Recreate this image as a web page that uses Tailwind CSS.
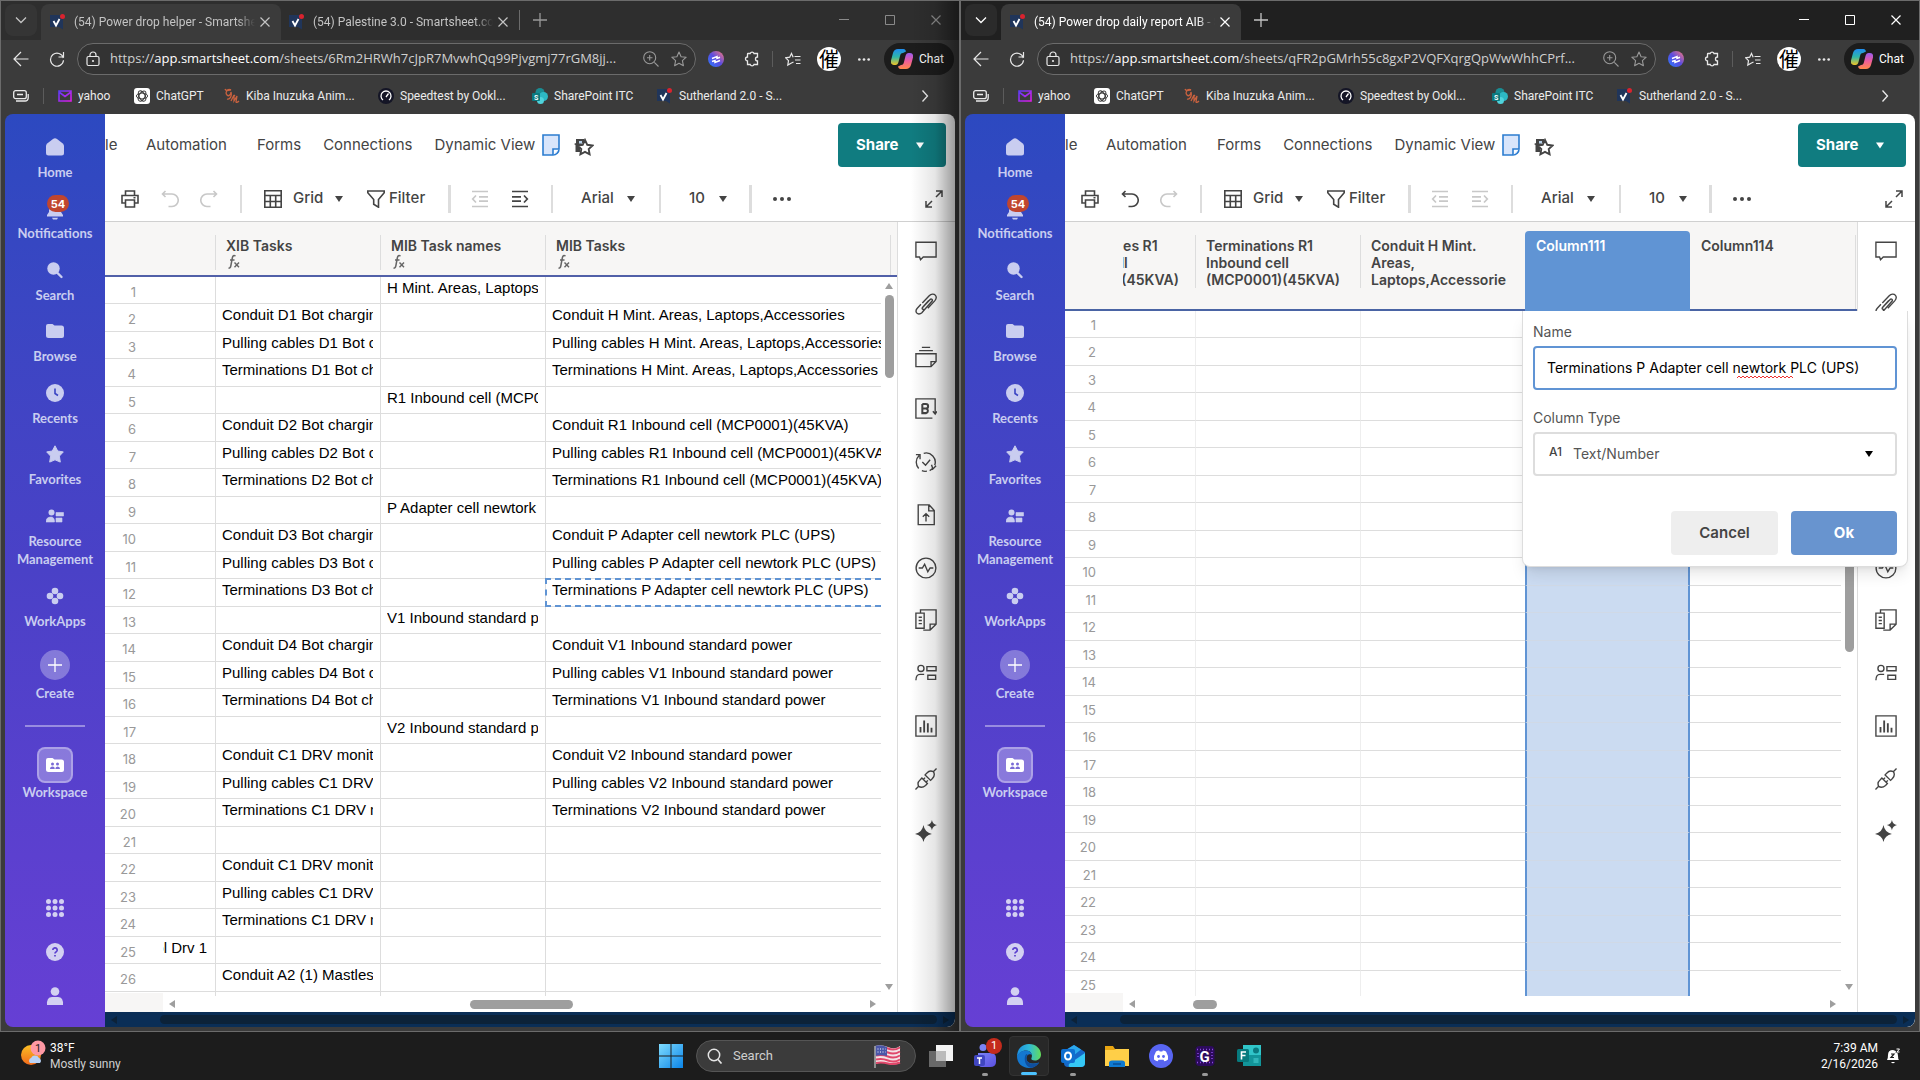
<!DOCTYPE html>
<html lang="en">

<head>
    <meta charset="UTF-8">
    <title>Desktop</title>
    <script src="https://cdn.jsdelivr.net/npm/@tailwindcss/browser@4"></script>
</head>

<body class="flex h-screen flex-col overflow-hidden bg-[#1c1c1c] font-['Roboto',sans-serif]">

    <!-- ICONS -->
    <svg class="absolute size-0">
        <linearGradient id="g-win" x1="0" y1="0" x2="1" y2="1"><stop offset="0" stop-color="#7fdcff"/><stop offset="1" stop-color="#0a84e8"/></linearGradient>
        <linearGradient id="g-yahoo" x1="0" y1="0" x2="1" y2="1"><stop offset="0" stop-color="#5b3cf5"/><stop offset="1" stop-color="#e01be8"/></linearGradient>
        <linearGradient id="g-orb" x1="0" y1="1" x2="1" y2="0"><stop offset="0" stop-color="#2a7bff"/><stop offset=".5" stop-color="#5b4be0"/><stop offset="1" stop-color="#ff7a7a"/></linearGradient>
        <linearGradient id="g-cop1" x1="0" y1="0" x2="0" y2="1"><stop offset="0" stop-color="#1f8df0"/><stop offset=".5" stop-color="#2fb7a8"/><stop offset="1" stop-color="#f2c526"/></linearGradient>
        <linearGradient id="g-cop2" x1="0" y1="0" x2="0" y2="1"><stop offset="0" stop-color="#9a5cf0"/><stop offset=".5" stop-color="#ee5c9c"/><stop offset="1" stop-color="#ff8a4a"/></linearGradient>
        <linearGradient id="g-edge" x1="0" y1="0" x2="1" y2="0"><stop offset="0" stop-color="#1c8fe0"/><stop offset=".5" stop-color="#2fb9d8"/><stop offset="1" stop-color="#63dc5a"/></linearGradient>
        <linearGradient id="g-teams" x1="0" y1="0" x2="1" y2="1"><stop offset="0" stop-color="#7b83f5"/><stop offset="1" stop-color="#5a4fe0"/></linearGradient>
        <linearGradient id="g-sun" x1="0" y1="0" x2="0" y2="1"><stop offset="0" stop-color="#fbbf24"/><stop offset="1" stop-color="#f26a1b"/></linearGradient>

        <symbol id="i-smart" viewBox="0 0 16 16"><path d="M0 1h13v14.500l-4-2.500H0z" fill="#20355a"/><path d="M3.500 7l2.500 4.500L9.500 5" fill="none" stroke="#fff" stroke-width="1.800"/><circle cx="12.500" cy="2.500" r="2.500" fill="#d9232e"/></symbol>
        <symbol id="i-chevdown" viewBox="0 0 12 12"><path d="M1 3.500l5 5 5-5" fill="none" stroke="currentColor" stroke-width="1.300"/></symbol>
        <symbol id="i-chevright" viewBox="0 0 12 12"><path d="M3.500 0.500l5 5.500-5 5.500" fill="none" stroke="currentColor" stroke-width="1.300"/></symbol>
        <symbol id="i-x" viewBox="0 0 12 12"><path d="M1.500 1.500l9 9M10.500 1.500l-9 9" fill="none" stroke="currentColor" stroke-width="1.200"/></symbol>
        <symbol id="i-plus" viewBox="0 0 16 16"><path d="M8 1v14M1 8h14" fill="none" stroke="currentColor" stroke-width="1.300"/></symbol>
        <symbol id="i-min" viewBox="0 0 12 12"><path d="M1 5.500h10" stroke="currentColor"/></symbol>
        <symbol id="i-max" viewBox="0 0 12 12"><path d="M1.500 1.500h9v9h-9z" fill="none" stroke="currentColor"/></symbol>
        <symbol id="i-back" viewBox="0 0 16 16"><path d="M15.500 8H1M8 1L1 8l7 7" fill="none" stroke="currentColor" stroke-width="1.200"/></symbol>
        <symbol id="i-reload" viewBox="0 0 16 16"><path d="M14.300 7a6.500 6.500 0 1 0 .2 2.200M14.500 1v5h-5" fill="none" stroke="currentColor" stroke-width="1.200"/></symbol>
        <symbol id="i-lock" viewBox="0 0 14 16"><path d="M2.500 5.500h9a1.500 1.500 0 0 1 1.500 1.500v6a1.500 1.500 0 0 1-1.500 1.500h-9A1.500 1.500 0 0 1 1 13V7a1.500 1.500 0 0 1 1.500-1.500zM4 5.500V4a3 3 0 0 1 6 0v1.500" fill="none" stroke="currentColor" stroke-width="1.200"/><circle cx="7" cy="10" r="1.100" fill="currentColor"/></symbol>
        <symbol id="i-zoomin" viewBox="0 0 16 16"><path d="M11.300 11.300L15.500 15.500M4 6.700h5.500M6.700 4v5.500" fill="none" stroke="currentColor" stroke-width="1.100"/><circle cx="6.700" cy="6.700" r="6" fill="none" stroke="currentColor" stroke-width="1.100"/></symbol>
        <symbol id="i-star" viewBox="0 0 16 16"><path d="M8 1l2.100 4.700 5.100.5-3.800 3.500 1 5L8 12.200l-4.400 2.500 1-5L.8 6.200l5.100-.5z" fill="none" stroke="currentColor" stroke-width="1.100" stroke-linejoin="round"/></symbol>
        <symbol id="i-orb" viewBox="0 0 16 16"><circle cx="8" cy="8" r="8" fill="url(#g-orb)"/><path d="M4 7.500l5-2v2l3-1.200M4 10.500l3-1v2l5-2" fill="none" stroke="#fff" stroke-width="1.500"/></symbol>
        <symbol id="i-puzzle" viewBox="0 0 16 16"><path d="M4 2.500h2.200a2 2 0 0 1 3.800 0h3.500v3.500a1.600 1.600 0 0 0 0 4v3.500H10a2 2 0 0 1-3.800 0H3.500V10a2 2 0 1 1 0-4V3a.5.5 0 0 1 .5-.5z" fill="none" stroke="currentColor" stroke-width="1.300"/></symbol>
        <symbol id="i-favs" viewBox="0 0 16 16"><path d="M8.500 11L6 12.200 2.800 14l.7-4.300L.7 6.800l4-.6L6.500 2.500l1.700 3.700M9.500 5.500h6M10 9h5.500M11 12.500h4.500" fill="none" stroke="currentColor" stroke-width="1.200"/></symbol>
        <symbol id="i-copilot" viewBox="0 0 22 20"><path d="M7 0h5.500c1.500 0 2 1 2.500 2.500L12 4c-2 0-2.500 1-3 3l-1.500 6c-.5 2-1.500 3-3 3H3c-2.500 0-3.500-2-3-4.500L2 4C2.800 1.500 4.500 0 7 0z" fill="url(#g-cop1)"/><path d="M15 20H9.500C8 20 7.500 19 7 17.500l3-1.500c2 0 2.500-1 3-3l1.500-6c.5-2 1.500-3 3-3H19c2.500 0 3.500 2 3 4.500L20 16c-.8 2.500-2.500 4-5 4z" fill="url(#g-cop2)"/></symbol>
        <symbol id="i-workspaces" viewBox="0 0 16 12"><rect x=".7" y=".7" width="12.600" height="8" rx="2" fill="none" stroke="currentColor" stroke-width="1.300"/><path d="M4 4.500h6M3 11h9a3 3 0 0 0 3.200-3V4" fill="none" stroke="currentColor" stroke-width="1.300"/></symbol>
        <symbol id="i-yahoo" viewBox="0 0 14 12"><path d="M1 1h12v10H1zM1 2l6 4.500L13 2" fill="none" stroke="url(#g-yahoo)" stroke-width="1.600"/></symbol>
        <symbol id="i-gpt" viewBox="0 0 16 16"><rect width="16" height="16" rx="3" fill="#fff"/><g fill="none" stroke="#333" stroke-width=".9"><ellipse cx="8" cy="8" rx="5.600" ry="2.900"/><ellipse cx="8" cy="8" rx="5.600" ry="2.900" transform="rotate(60 8 8)"/><ellipse cx="8" cy="8" rx="5.600" ry="2.900" transform="rotate(120 8 8)"/></g></symbol>
        <symbol id="i-kiba" viewBox="0 0 16 16"><path d="M1 1c1 3 5 1 6 1-4-2-6 3-4 5s4-1 4-3c1 4-1 8-4 7M7 13l3-6v6l3-5-1 6c1 1 2 0 3-1M10 8l1-1" fill="none" stroke="#c9623f" stroke-width="1.300"/></symbol>
        <symbol id="i-speed" viewBox="0 0 16 16"><circle cx="8" cy="8" r="8" fill="#141526"/><path d="M5 12a5 5 0 1 1 6 0M8 9l2.500-3.500" fill="none" stroke="#fff" stroke-width="1.300"/></symbol>
        <symbol id="i-sharepoint" viewBox="0 0 16 16"><circle cx="8" cy="4.500" r="4.500" fill="#1a8c93"/><circle cx="11.500" cy="8.500" r="4.500" fill="#2db8c4"/><circle cx="8.500" cy="12.500" r="3.500" fill="#4fd3dc"/><rect y="5" width="8" height="8" rx="1" fill="#0b7a80"/><text x="2" y="11.500" font-size="7" font-weight="700" fill="#fff">S</text></symbol>

        <symbol id="i-home" viewBox="0 0 18 18"><path d="M0 8Q0 6.500 1.200 5.500L7 1q2-1.400 4 0l5.800 4.500Q18 6.500 18 8v7a2.500 2.500 0 0 1-2.500 2.500h-13A2.500 2.500 0 0 1 0 15z" fill="currentColor"/></symbol>
        <symbol id="i-bell" viewBox="0 0 18 18"><path d="M9 0a6 6 0 0 0-6 6v4l-2 3v1.500h16V13l-2-3V6a6 6 0 0 0-6-6zM6 15.800h6L11 17.500H7z" fill="currentColor"/></symbol>
        <symbol id="i-search" viewBox="0 0 18 18"><circle cx="7.500" cy="7.500" r="6.200" fill="currentColor"/><path d="M10.500 11l5 5" stroke="currentColor" stroke-width="2.400" stroke-linecap="round"/></symbol>
        <symbol id="i-folder" viewBox="0 0 18 18"><path d="M0 4a2 2 0 0 1 2-2h4.500l2 1.500H15.500a2.500 2.500 0 0 1 2.500 2.500v8a2 2 0 0 1-2 2H2.500A2.500 2.500 0 0 1 0 13.500z" fill="currentColor"/></symbol>
        <symbol id="i-clock" viewBox="0 0 18 18"><circle cx="9" cy="9" r="9" fill="currentColor"/><path d="M9 4.500V9.500l3 2" fill="none" stroke="#3a44c4" stroke-width="1.600"/></symbol>
        <symbol id="i-fav" viewBox="0 0 18 18"><path d="M9 .8l2.700 5.200 5.600.9-3.900 4.200.9 6L9 14.800l-5.300 2.300.9-6L.7 6.900 6.300 6z" fill="currentColor" stroke="currentColor" stroke-linejoin="round"/></symbol>
        <symbol id="i-res" viewBox="0 0 18 14"><circle cx="5.500" cy="3.500" r="3" fill="currentColor"/><path d="M0 13q0-5 5-5 3.500 0 3.500 5zM10 3.500h7.500v3.500H10zM10 9h6v4h-6z" fill="currentColor" stroke="currentColor" stroke-width=".6" stroke-linejoin="round"/></symbol>
        <symbol id="i-apps" viewBox="0 0 18 18"><g fill="currentColor"><circle cx="9" cy="4" r="3.300"/><circle cx="4" cy="9" r="3.300"/><circle cx="14" cy="9" r="3.300"/><circle cx="9" cy="14" r="3.300"/></g></symbol>
        <symbol id="i-wsp" viewBox="0 0 18 16"><path d="M0 3a2 2 0 0 1 2-2h4.500l2 1.500H15.500A2.500 2.500 0 0 1 18 5v8a2 2 0 0 1-2 2H2.500A2.500 2.500 0 0 1 0 12.500z" fill="#fff"/><g fill="#7a6bd6"><circle cx="6.500" cy="7" r="1.500"/><circle cx="11.500" cy="7" r="1.500"/><path d="M4 12q0-2.500 2.500-2.500T8.700 12zM9.300 12q0-2.500 2.400-2.500T14 12z"/></g></symbol>
        <symbol id="i-nine" viewBox="0 0 18 18"><g fill="currentColor"><circle cx="2.500" cy="2.500" r="2.500"/><circle cx="9" cy="2.500" r="2.500"/><circle cx="15.500" cy="2.500" r="2.500"/><circle cx="2.500" cy="9" r="2.500"/><circle cx="9" cy="9" r="2.500"/><circle cx="15.500" cy="9" r="2.500"/><circle cx="2.500" cy="15.500" r="2.500"/><circle cx="9" cy="15.500" r="2.500"/><circle cx="15.500" cy="15.500" r="2.500"/></g></symbol>
        <symbol id="i-help" viewBox="0 0 18 18"><circle cx="9" cy="9" r="9" fill="currentColor"/><path d="M6.800 7a2.200 2.200 0 1 1 3.200 2q-1 .5-1 1.500M9 12v1.600" fill="none" stroke="#5a3fce" stroke-width="1.700"/></symbol>
        <symbol id="i-user" viewBox="0 0 18 18"><circle cx="9" cy="4.500" r="4.300" fill="currentColor"/><path d="M1 18q-.5-8 5-8h6q5.500 0 5 8z" fill="currentColor"/></symbol>

        <symbol id="i-print" viewBox="0 0 18 18"><path d="M4.500 5V1h9v4M4.500 13H1V5.500h16V13h-3.500M4.500 10h9v7h-9zM12.500 7.700h2" fill="none" stroke="currentColor" stroke-width="1.600"/></symbol>
        <symbol id="i-undo" viewBox="0 0 18 18"><path d="M4.500 1L1.500 4l3 3M1.500 4H11a6 6 0 0 1 0 12.500H7.500" fill="none" stroke="currentColor" stroke-width="1.600"/></symbol>
        <symbol id="i-redo" viewBox="0 0 18 18"><path d="M13.500 1l3 3-3 3M16.500 4H7a6 6 0 0 0 0 12.500h3.500" fill="none" stroke="currentColor" stroke-width="1.600"/></symbol>
        <symbol id="i-grid" viewBox="0 0 18 18"><path d="M.8.8h16.400v16.400H.8zM.8 5.500h16.400M.8 11.500h16.400M6.300 5.500v11.700M11.700 5.500v11.700" fill="none" stroke="currentColor" stroke-width="1.600"/></symbol>
        <symbol id="i-filter" viewBox="0 0 18 18"><path d="M.8 1h16.400v1.800L11.500 9.500v7.700l-4.800-3V9.500L.8 2.800z" fill="none" stroke="currentColor" stroke-width="1.600"/></symbol>
        <symbol id="i-outdent" viewBox="0 0 18 18"><path d="M1 1.500h16M1 16.500h16M8 6.800h9M8 11.200h9M5 5.500L1.700 9 5 12.500" fill="none" stroke="currentColor" stroke-width="1.700"/></symbol>
        <symbol id="i-indent" viewBox="0 0 18 18"><path d="M1 1.500h16M1 16.500h16M1 6.800h9M1 11.200h9M13 5.500L16.300 9 13 12.500" fill="none" stroke="currentColor" stroke-width="1.700"/></symbol>
        <symbol id="i-caret" viewBox="0 0 8 6"><path d="M0 0h8L4 6z" fill="currentColor"/></symbol>
        <symbol id="i-dots" viewBox="0 0 18 4"><g fill="currentColor"><circle cx="2" cy="2" r="2"/><circle cx="9" cy="2" r="2"/><circle cx="16" cy="2" r="2"/></g></symbol>
        <symbol id="i-expand" viewBox="0 0 18 18"><path d="M11 1h6v6M17 1l-6 6M7 17H1v-6M1 17l6-6" fill="none" stroke="currentColor" stroke-width="1.500"/></symbol>
        <symbol id="i-note" viewBox="0 0 18 22"><path d="M1 1h16v14a6 6 0 0 1-6 6H1z" fill="#d8e5fb" stroke="#2b7cd0" stroke-width="1.600"/><path d="M11 21v-6h6" fill="#fff" stroke="#2b7cd0" stroke-width="1.600"/></symbol>
        <symbol id="i-favsheet" viewBox="0 0 20 20"><path d="M2 2h8v3L6 8v7H1.500V8L0 7l2-1z" fill="#444"/><path d="M5 4h3v2.500H5z" fill="#b7d0e8"/><path d="M11 3l2.300 4.800 5.200.7-3.800 3.600.9 5.200-4.600-2.500-4.600 2.500.9-5.200-3.800-3.600 5.200-.7z" fill="#fff" stroke="#444" stroke-width="1.900"/></symbol>
        <symbol id="i-fx" viewBox="0 0 12 16"><path d="M7.500 2q-2.500-1.500-3.200 2L2.800 12q-.5 2.500-2.300 2M2 6h4.500" fill="none" stroke="currentColor" stroke-width="1.500"/><path d="M6.500 8.500l4.500 4.800M11 8.500l-4.500 4.800" stroke="currentColor" stroke-width="1.400"/></symbol>

        <symbol id="i-p1" viewBox="0 0 24 24"><path d="M1 2.500h22v16H9l-3 3-1-3H1z"/></symbol>
        <symbol id="i-p2" viewBox="0 0 24 24"><path d="M8.500 15.500l8-8.500c1.200-1.200 3.200.2 2.200 1.800L11 17.500l-3.500 4c-2 2-5 1.800-6-.2-.8-1.600-.2-3.300 1-4.600l4-4.500M15 8L8.200 15.800c-1 1.400.4 2.800 1.800 1.700M8 11l7.500-8c2-2.200 5.300-2.300 6.800-.4 1.500 2 .8 4.200-.8 6l-7.500 8"/></symbol>
        <symbol id="i-p3" viewBox="0 0 24 24"><path d="M1 8.500h22V17l-5.500 5.500H1zM17.500 22.500V17H23M4.500 5h15M7.500 1.500h9"/></symbol>
        <symbol id="i-p4" viewBox="0 0 24 24"><path d="M19 22H1V1h21v10M22 9v8M19.500 14.500l2.500 3 2-3"/><path d="M8 6.500v10h4.200a2.600 2.600 0 0 0 0-5H8M8 6.500h3.800a2.500 2.500 0 0 1 0 5" stroke-width="2.200"/></symbol>
        <symbol id="i-p5" viewBox="0 0 24 24"><path d="M4 19A10 10 0 0 1 4.500 5M9.500 2.500a10 10 0 0 1 12 13M13 22q-3 .5-5.500-.5M19.500 18.500q-1.500 2-3.500 3M1 4l4.500 0v5M23 16l-3.500 3.500-1.500-4.500M8 12l3.500 3.500 5-6"/></symbol>
        <symbol id="i-p6" viewBox="0 0 24 24"><path d="M3.500 1h12L21 7v15.500H3.500zM15 1v6.500h6M12 19v-8M8.500 14l3.500-3.500 3.500 3.500"/></symbol>
        <symbol id="i-p7" viewBox="0 0 24 24"><circle cx="12" cy="12" r="10.800"/><path d="M4 12h4l2.500-4 3.500 8 2.500-4H20"/></symbol>
        <symbol id="i-p8" viewBox="0 0 24 24"><path d="M6 4.500V1h17v15.500L16.500 23H9M23 16.500h-6.500V23M1 4.500h9V21H1zM4 9h3.500M4 12.500h3.500M4 16h3.500"/></symbol>
        <symbol id="i-p9" viewBox="0 0 24 24"><circle cx="6.500" cy="7" r="3.300"/><path d="M1 20q0-6.500 4.500-6.500H10M13 5h10v4.500H13zM14 14.500h8.500v4.500H14z"/></symbol>
        <symbol id="i-p10" viewBox="0 0 24 24"><path d="M1 1h22v22H1z"/><path d="M6 13v6M10 6v13M14 9v10M18 14v5" stroke-width="2"/></symbol>
        <symbol id="i-p11" viewBox="0 0 24 24"><path d="M.5 23.500L4 20M20 4L23.500.5M4 20q-2-4 1.500-7l2-2 6 6-2 2q-4 3.500-7.500 1zM20 4q-4-2-7 1.500l-2 2 6 6 2-2q3.500-4 1-7.500zM9 12.500l2-2M12 15.500l2-2"/></symbol>
        <symbol id="i-p12" viewBox="0 0 26 26"><path d="M10 6q1.500 9 10 10.500Q11.500 18 10 26 8.500 18 0 16.500 8.500 15 10 6zM20 0q1 5 6 6-5 1-6 6-1-5-6-6 5-1 6-6z" fill="currentColor" stroke="none"/></symbol>
    </svg>

    <!-- ADDRESS BAR AND BOOKMARKS -->
    <template id="tpl-chrome">
        <div class="flex h-[39px] items-center pb-px text-[#e8e8e8]">
            <button class="ml-3" aria-label="Back"><svg class="size-4"><use href="#i-back"/></svg></button>
            <button class="ml-5" aria-label="Refresh"><svg class="size-4"><use href="#i-reload"/></svg></button>
            <div class="ml-3 flex h-8 min-w-0 flex-1 items-center rounded-full border border-[#6b6b6b] bg-[#333] pl-2 pr-2">
                <svg class="h-4 w-3.5 shrink-0"><use href="#i-lock"/></svg>
                <p class="ml-2.5 min-w-0 flex-1 overflow-hidden whitespace-nowrap font-['Open_Sans',sans-serif] text-[13px] text-[#d0d0d0]">https://<span class="text-white">app.smartsheet.com</span><span data-path></span></p>
                <svg class="ml-3 size-4 shrink-0 text-[#999]"><use href="#i-zoomin"/></svg>
                <svg class="ml-3 size-4 shrink-0 text-[#999]"><use href="#i-star"/></svg>
            </div>
            <svg class="ml-3 size-4"><use href="#i-orb"/></svg>
            <svg class="ml-5 size-4"><use href="#i-puzzle"/></svg>
            <div class="ml-3 h-4 w-px bg-[#5c5c5c]"></div>
            <svg class="ml-3 size-4"><use href="#i-favs"/></svg>
            <span class="ml-4 flex size-6 items-center justify-center overflow-hidden rounded-full bg-white font-['Noto_Sans_CJK_JP',sans-serif] text-xl leading-6 text-black">催</span>
            <svg class="ml-[17px] h-[3px] w-3"><use href="#i-dots"/></svg>
            <button class="ml-3.5 mr-[5px] flex h-8 w-[70px] items-center gap-1.5 rounded-full bg-[#1c1c1c] pl-[7px] text-xs text-white">
                <svg class="h-5 w-[22px] shrink-0"><use href="#i-copilot"/></svg>Chat
            </button>
        </div>
        <nav class="flex h-[34px] items-center text-xs text-[#ececec]">
            <svg class="ml-3 h-3 w-4"><use href="#i-workspaces"/></svg>
            <div class="ml-3.5 h-4 w-px bg-[#5c5c5c]"></div>
            <a href="#" class="ml-3.5 flex w-[76px] items-center gap-1.5"><svg class="h-3 w-3.5"><use href="#i-yahoo"/></svg>yahoo</a>
            <a href="#" class="flex w-[90px] items-center gap-1.5"><svg class="size-4"><use href="#i-gpt"/></svg>ChatGPT</a>
            <a href="#" class="flex w-[154px] items-center gap-1.5"><svg class="size-4"><use href="#i-kiba"/></svg>Kiba Inuzuka Anim...</a>
            <a href="#" class="flex w-[154px] items-center gap-1.5"><svg class="size-4"><use href="#i-speed"/></svg>Speedtest by Ookl...</a>
            <a href="#" class="flex w-[125px] items-center gap-1.5"><svg class="size-4"><use href="#i-sharepoint"/></svg>SharePoint ITC</a>
            <a href="#" class="flex items-center gap-1.5"><svg class="size-4"><use href="#i-smart"/></svg>Sutherland 2.0 - S...</a>
            <svg class="ml-auto mr-7 size-3"><use href="#i-chevright"/></svg>
        </nav>
    </template>

    <!-- APP SIDEBAR -->
    <template id="tpl-sidebar">
        <nav class="flex w-[100px] shrink-0 flex-col rounded-l-lg bg-linear-to-b from-[#2c49c0] via-[#4a41c7] to-[#663fd4] pt-[21px] text-center font-['Lato',sans-serif] text-[13px] font-bold leading-[18px] text-[#c9cdf0]">
            <a href="#" class="flex h-[61px] flex-col items-center gap-1"><span class="flex h-6 items-center"><svg class="size-[18px]"><use href="#i-home"/></svg></span>Home</a>
            <a href="#" class="relative flex h-[62px] flex-col items-center gap-1"><span class="flex h-6 items-end"><svg class="size-[18px]"><use href="#i-bell"/></svg></span>Notifications
                <span class="absolute left-[42px] -top-px flex h-[17px] w-[22px] items-center justify-center rounded-full bg-[#c0452f] font-['Inter',sans-serif] text-[11px] text-white">54</span></a>
            <a href="#" class="flex h-[61px] flex-col items-center gap-1"><span class="flex h-6 items-center"><svg class="size-[18px]"><use href="#i-search"/></svg></span>Search</a>
            <a href="#" class="flex h-[62px] flex-col items-center gap-1"><span class="flex h-6 items-center"><svg class="size-[18px]"><use href="#i-folder"/></svg></span>Browse</a>
            <a href="#" class="flex h-[61px] flex-col items-center gap-1"><span class="flex h-6 items-center"><svg class="size-[18px]"><use href="#i-clock"/></svg></span>Recents</a>
            <a href="#" class="flex h-[62px] flex-col items-center gap-1"><span class="flex h-6 items-center"><svg class="size-[18px]"><use href="#i-fav"/></svg></span>Favorites</a>
            <a href="#" class="flex h-20 flex-col items-center gap-1"><span class="flex h-6 items-center"><svg class="h-3.5 w-[18px]"><use href="#i-res"/></svg></span><span>Resource<br>Management</span></a>
            <a href="#" class="flex h-[66px] flex-col items-center gap-1"><span class="flex h-6 items-center"><svg class="size-[18px]"><use href="#i-apps"/></svg></span>WorkApps</a>
            <button class="flex flex-col items-center gap-1 font-bold"><span class="flex size-[30px] items-center justify-center rounded-full bg-white/30 text-white"><svg class="size-4"><use href="#i-plus"/></svg></span>Create</button>
            <div class="mx-5 mb-5 mt-[23px] h-0.5 bg-white/40"></div>
            <a href="#" class="flex flex-col items-center"><span class="flex size-9 items-center justify-center rounded-lg border-2 border-white/30 bg-white/30"><svg class="h-4 w-[18px]"><use href="#i-wsp"/></svg></span>Workspace</a>
            <div class="mb-[22px] mt-auto flex flex-col items-center gap-[26px] text-[#d3d0f2]">
                <svg class="size-[18px]"><use href="#i-nine"/></svg>
                <svg class="size-[18px]"><use href="#i-help"/></svg>
                <svg class="size-[18px]"><use href="#i-user"/></svg>
            </div>
        </nav>
    </template>

    <!-- SHEET MENU AND TOOLBAR -->
    <template id="tpl-menu">
        <div class="flex h-[62px] items-center text-[15px] text-[#444]">
            <a href="#" class="w-3">le</a>
            <a href="#" class="ml-[29px]">Automation</a>
            <a href="#" class="ml-[30px]">Forms</a>
            <a href="#" class="ml-[22px]">Connections</a>
            <a href="#" class="ml-[22px]">Dynamic View</a>
            <svg class="ml-[7px] h-[22px] w-[18px]"><use href="#i-note"/></svg>
            <svg class="ml-3.5 mt-1 size-5"><use href="#i-favsheet"/></svg>
            <button class="ml-auto mr-[9px] flex h-11 w-[108px] items-center rounded bg-[#107c80] pl-[18px] font-bold text-white">Share<svg class="ml-[17px] h-[7px] w-2"><use href="#i-caret"/></svg></button>
        </div>
        <div class="flex h-[46px] items-center border-b border-[#d0d0d0] text-[15px] font-medium text-[#444]">
            <svg class="ml-4 size-[18px]"><use href="#i-print"/></svg>
            <svg class="ml-[22px] size-[18px] text-[#c8c8c8] group-data-[win=report]:text-[#444]"><use href="#i-undo"/></svg>
            <svg class="ml-[21px] size-[18px] text-[#c8c8c8]"><use href="#i-redo"/></svg>
            <div class="ml-[22px] h-7 w-0.5 bg-[#ddd]"></div>
            <button class="ml-[22px] flex items-center"><svg class="size-[18px]"><use href="#i-grid"/></svg><span class="ml-[11px] w-[30px] text-left">Grid</span><svg class="ml-3 h-1.5 w-2"><use href="#i-caret"/></svg></button>
            <button class="ml-6 flex w-[58px] items-center gap-1"><svg class="size-[18px] shrink-0"><use href="#i-filter"/></svg>Filter</button>
            <div class="ml-[23px] h-7 w-[3px] bg-[#ddd]"></div>
            <svg class="ml-5 size-[18px] text-[#c8c8c8]"><use href="#i-outdent"/></svg>
            <svg class="ml-[22px] size-[18px] group-data-[win=report]:text-[#c8c8c8]"><use href="#i-indent"/></svg>
            <div class="ml-[22px] h-7 w-0.5 bg-[#ddd]"></div>
            <button class="ml-7 flex items-center"><span class="w-8 text-left">Arial</span><svg class="ml-3.5 h-1.5 w-2"><use href="#i-caret"/></svg></button>
            <div class="ml-6 h-7 w-0.5 bg-[#ddd]"></div>
            <button class="ml-7 flex items-center"><span class="w-[18px] text-left">10</span><svg class="ml-3 h-1.5 w-2"><use href="#i-caret"/></svg></button>
            <div class="ml-[22px] h-7 w-[3px] bg-[#ddd]"></div>
            <svg class="ml-[21px] h-1 w-[18px]"><use href="#i-dots"/></svg>
            <svg class="ml-auto mr-3 size-[18px]"><use href="#i-expand"/></svg>
        </div>
    </template>

    <!-- RIGHT ICON RAIL -->
    <template id="tpl-rail">
        <div data-rail class="flex w-[58px] shrink-0 flex-col items-center border-l border-[#ddd] pr-0.5 pt-0.5 fill-none stroke-[#444] stroke-[1.5] text-[#444]"></div>
    </template>

    <!-- PAGE SCROLLBAR -->
    <template id="tpl-pagescroll">
        <div class="flex h-[15px] items-center rounded-br-lg bg-[#0a2e56] px-1.5 text-[#0c2238]">
            <svg class="h-2 w-1.5 rotate-180"><path d="M0 0l6 4-6 4z" fill="currentColor"/></svg>
            <div class="ml-[43px] h-[9px] flex-1 rounded-full bg-[#0c2238]"></div>
            <svg class="ml-1.5 h-2 w-1.5"><path d="M0 0l6 4-6 4z" fill="currentColor"/></svg>
        </div>
    </template>

    <main class="grid min-h-0 flex-1 grid-cols-2">

        <!-- LEFT WINDOW -->
        <section data-win="helper" data-path="/sheets/6Rm2HRWh7cJpR7MvwhQq99Pjvgmj77rGM8jj..." class="group relative flex min-h-0 min-w-0 flex-col border border-[#6b6b6b] bg-[#3b3b3b]">
            <div class="flex h-[39px] shrink-0 items-end bg-[#2e2e2e] pl-1 text-xs text-[#c4c4c4]">
                <button class="mb-1 flex size-8 items-center justify-center rounded-lg bg-[#353535]" aria-label="Tabs"><svg class="size-3"><use href="#i-chevdown"/></svg></button>
                <div class="ml-1 flex h-9 w-60 items-center rounded-t-lg bg-[#3b3b3b] pl-[9px] pr-2.5">
                    <svg class="size-4 shrink-0"><use href="#i-smart"/></svg>
                    <span class="ml-2 min-w-0 flex-1 overflow-hidden whitespace-nowrap mask-r-from-90%">(54) Power drop helper - Smartsheet.com</span>
                    <svg class="ml-1 size-3 shrink-0"><use href="#i-x"/></svg>
                </div>
                <div class="flex h-9 w-[238px] items-center pl-2 pr-2.5">
                    <svg class="size-4 shrink-0"><use href="#i-smart"/></svg>
                    <span class="ml-2 min-w-0 flex-1 overflow-hidden whitespace-nowrap mask-r-from-90%">(54) Palestine 3.0 - Smartsheet.com</span>
                    <svg class="ml-1 size-3 shrink-0"><use href="#i-x"/></svg>
                </div>
                <div class="mb-2.5 h-5 w-px bg-[#6b6b6b]"></div>
                <svg class="mb-3 ml-3 size-4 text-[#999]"><use href="#i-plus"/></svg>
                <div class="mb-3.5 ml-auto mr-[17px] flex gap-[34px] text-[#8a8a8a]">
                    <svg class="size-3"><use href="#i-min"/></svg>
                    <svg class="size-3"><use href="#i-max"/></svg>
                    <svg class="size-3"><use href="#i-x"/></svg>
                </div>
            </div>
            <div data-use="chrome"></div>
            <div class="mx-1 mb-1 mt-px flex min-h-0 flex-1">
                <div data-use="sidebar"></div>
                <div class="flex min-w-0 flex-1 flex-col overflow-hidden rounded-r-lg bg-white font-['Inter',sans-serif]">
                    <div data-use="menu"></div>
                    <div class="flex min-h-0 flex-1">
                        <div class="flex min-w-0 flex-1 flex-col">
                            <div class="flex min-h-0 flex-1">
                                <div class="min-w-0 flex-1 overflow-hidden">
                                    <table class="w-full table-fixed border-separate border-spacing-0">
                                        <colgroup><col class="w-[58px]"><col class="w-[52px]"><col class="w-[165px]"><col class="w-[165px]"><col></colgroup>
                                        <thead>
                                            <tr id="helper-head" class="h-[55px] bg-[#f7f6f5] text-left align-top text-sm leading-[17px] text-[#444]"></tr>
                                        </thead>
                                        <tbody id="helper-rows"></tbody>
                                    </table>
                                </div>
                                <div class="flex w-4 shrink-0 flex-col items-center text-[#9e9e9e]">
                                    <div class="h-[55px] self-stretch border-b-2 border-[#5160a8] bg-[#f7f6f5] pr-1.5 pt-[13px]"><div class="h-10 border-r border-[#ddd]"></div></div>
                                    <svg class="mt-1.5 h-1.5 w-2 rotate-180"><use href="#i-caret"/></svg>
                                    <div class="mt-1.5 h-[83px] w-[9px] rounded-full bg-[#9e9e9e]"></div>
                                    <svg class="mb-1.5 mt-auto h-1.5 w-2"><use href="#i-caret"/></svg>
                                </div>
                            </div>
                            <div class="flex h-4 items-end text-[#9e9e9e]">
                                <div class="relative h-[19px] w-[58px] shrink-0 bg-[#f7f6f5]"></div>
                                <div class="flex h-4 flex-1 items-center pl-1.5 pr-[21px]">
                                    <svg class="h-2 w-1.5 rotate-180"><path d="M0 0l6 4-6 4z" fill="currentColor"/></svg>
                                    <div class="ml-[295px] h-[9px] w-[103px] rounded-full bg-[#9e9e9e]"></div>
                                    <svg class="ml-auto h-2 w-1.5"><path d="M0 0l6 4-6 4z" fill="currentColor"/></svg>
                                </div>
                            </div>
                        </div>
                        <div data-use="rail"></div>
                    </div>
                    <div data-use="pagescroll"></div>
                </div>
            </div>
            <div class="pointer-events-none absolute inset-y-0 right-0 w-12 bg-linear-to-l from-black/45 via-black/10 to-transparent"></div>
        </section>

        <!-- RIGHT WINDOW -->
        <section data-win="report" data-path="/sheets/qFR2pGMrh55c8gxP2VQFXqrgQpWwWhhCPrf..." class="group relative flex min-h-0 min-w-0 flex-col border border-[#6b6b6b] bg-[#3b3b3b]">
            <div class="flex h-[39px] shrink-0 items-end bg-[#202020] pl-1 text-xs text-white">
                <button class="mb-1 flex size-8 items-center justify-center rounded-lg bg-[#2b2b2b]" aria-label="Tabs"><svg class="size-3"><use href="#i-chevdown"/></svg></button>
                <div class="ml-1 flex h-9 w-60 items-center rounded-t-lg bg-[#3b3b3b] pl-[9px] pr-2.5">
                    <svg class="size-4 shrink-0"><use href="#i-smart"/></svg>
                    <span class="ml-2 min-w-0 flex-1 overflow-hidden whitespace-nowrap mask-r-from-90%">(54) Power drop daily report AIB - Smartsheet.com</span>
                    <svg class="ml-1 size-3 shrink-0"><use href="#i-x"/></svg>
                </div>
                <svg class="mb-3 ml-3 size-4 text-[#c4c4c4]"><use href="#i-plus"/></svg>
                <div class="mb-3.5 ml-auto mr-[17px] flex gap-[34px]">
                    <svg class="size-3"><use href="#i-min"/></svg>
                    <svg class="size-3"><use href="#i-max"/></svg>
                    <svg class="size-3"><use href="#i-x"/></svg>
                </div>
            </div>
            <div data-use="chrome"></div>
            <div class="mx-1 mb-1 mt-px flex min-h-0 flex-1">
                <div data-use="sidebar"></div>
                <div class="flex min-w-0 flex-1 flex-col overflow-hidden rounded-r-lg bg-white font-['Inter',sans-serif]">
                    <div data-use="menu"></div>
                    <div class="flex min-h-0 flex-1">
                        <div class="flex min-w-0 flex-1 flex-col">
                            <div class="flex min-h-0 flex-1">
                                <div class="min-w-0 flex-1 overflow-hidden">
                                    <table class="w-full table-fixed border-separate border-spacing-0">
                                        <colgroup><col class="w-[58px]"><col class="w-[72px]"><col class="w-[165px]"><col class="w-[165px]"><col class="w-[165px]"><col></colgroup>
                                        <thead>
                                            <tr id="report-head" class="h-[89px] bg-[#f7f6f5] text-left align-top text-sm leading-[17px] text-[#444]"></tr>
                                        </thead>
                                        <tbody id="report-rows"></tbody>
                                    </table>
                                </div>
                                <div class="flex w-4 shrink-0 flex-col items-center text-[#9e9e9e]">
                                    <div class="h-[89px] self-stretch border-b-2 border-[#4a64a4] bg-[#f7f6f5] pr-px pt-[13px]"><div class="h-[74px] border-r border-[#ddd]"></div></div>
                                    <div class="mt-[200px] h-[141px] w-[9px] rounded-full bg-[#9e9e9e]"></div>
                                    <svg class="mb-1.5 mt-auto h-1.5 w-2"><use href="#i-caret"/></svg>
                                </div>
                            </div>
                            <div class="flex h-4 items-end text-[#9e9e9e]">
                                <div class="relative h-[19px] w-[58px] shrink-0 bg-[#f7f6f5]"></div>
                                <div class="flex h-4 flex-1 items-center pl-1.5 pr-[21px]">
                                    <svg class="h-2 w-1.5 rotate-180"><path d="M0 0l6 4-6 4z" fill="currentColor"/></svg>
                                    <div class="ml-[58px] h-[9px] w-6 rounded-full bg-[#9e9e9e]"></div>
                                    <svg class="ml-auto h-2 w-1.5"><path d="M0 0l6 4-6 4z" fill="currentColor"/></svg>
                                </div>
                            </div>
                        </div>
                        <div data-use="rail"></div>
                    </div>
                    <div data-use="pagescroll"></div>
                </div>
            </div>

            <!-- COLUMN PROPERTIES -->
            <form class="absolute right-[11px] top-[310px] h-[256px] w-[386px] rounded-b-lg border border-t-0 border-[#ddd] bg-white px-2.5 pt-2.5 font-['Inter',sans-serif] text-sm text-[#555] shadow-lg">
                <label for="col-name" class="block h-[25px] leading-[22px]">Name</label>
                <div class="relative">
                    <input id="col-name" type="text" spellcheck="false" value="Terminations P Adapter cell newtork PLC (UPS)" class="block h-11 w-full rounded border-2 border-[#6094d4] px-3 pb-0.5 text-black outline-none">
                    <svg class="absolute left-[204px] top-[29px] h-1 w-14"><path d="M0 3l2-2 2 2 2-2 2 2 2-2 2 2 2-2 2 2 2-2 2 2 2-2 2 2 2-2 2 2 2-2 2 2 2-2 2 2 2-2 2 2 2-2 2 2 2-2 2 2 2-2 2 2 2-2 2 2" fill="none" stroke="#e33"/></svg>
                </div>
                <label for="col-type" class="mt-[17px] block h-[25px] leading-[22px]">Column Type</label>
                <div class="relative">
                    <select id="col-type" class="block h-11 w-full appearance-none rounded border-2 border-[#ddd] bg-white pl-[38px] text-[#555] outline-none">
                        <option>Text/Number</option>
                    </select>
                    <span class="pointer-events-none absolute left-4 top-3 text-xs font-medium leading-4 text-[#444]">A1</span>
                    <svg class="pointer-events-none absolute right-6 top-[19px] h-1.5 w-2 text-black"><use href="#i-caret"/></svg>
                </div>
                <div class="mt-[35px] flex justify-end gap-[13px] text-[15px]">
                    <button type="button" class="h-11 w-[107px] rounded bg-[#eee] font-semibold text-[#444]">Cancel</button>
                    <button type="button" class="h-11 w-[106px] rounded bg-[#6894cf] font-bold text-white">Ok</button>
                </div>
            </form>
        </section>
    </main>

    <!-- TASKBAR -->
    <footer class="relative flex h-12 shrink-0 items-center justify-center text-xs leading-4 text-white">
        <div class="absolute left-5 top-2 flex items-center">
            <svg class="-mt-1 h-7 w-[30px]"><circle cx="11" cy="15" r="10" fill="url(#g-sun)"/><path d="M10 23a3 3 0 0 1 1-5 4.500 4.500 0 0 1 8 0 3 3 0 0 1 1 5z" fill="#b9d3f7"/><circle cx="18" cy="8" r="7.500" fill="#ff99a4"/><text x="15" y="12" font-size="11" fill="#222">1</text></svg>
            <p>38°F<br><span class="text-[#cfcfcf]">Mostly sunny</span></p>
        </div>

        <button class="flex w-11 justify-center" aria-label="Start"><svg class="size-6" viewBox="0 0 24 24"><path d="M0 0h11.500v11.500H0zM12.500 0H24v11.500H12.500zM0 12.500h11.500V24H0zM12.500 12.500H24V24H12.500z" fill="url(#g-win)"/></svg></button>
        <div class="mx-[3px] flex h-8 w-[220px] items-center rounded-full border border-[#555] bg-[#3b3b3b] pl-2.5 pr-3.5">
            <svg class="size-4 shrink-0" viewBox="0 0 16 16"><circle cx="7" cy="7" r="5.700" fill="none" stroke="#e5e5e5" stroke-width="1.500"/><path d="M11 11.500l3.500 4" stroke="#e5e5e5" stroke-width="1.700"/></svg>
            <input type="text" placeholder="Search" aria-label="Search" class="ml-2.5 w-0 flex-1 bg-transparent text-[13px] outline-none placeholder:text-[#cfcfcf]">
            <svg class="h-[23px] w-[27px]" viewBox="0 0 27 23"><path d="M1 1q6-2 13 1t12-1v17q-6 2.500-12 .5t-12 .5z" fill="#f3e3e6"/><path d="M2 2.500q6-1.500 12 1t12-1M2 6.500q6-1.500 12 1t12-1M2 10.500q6-1.500 12 1t12-1M2 14.500q6-1.500 12 1t12-1M2 18q6-1 12 .5t12-1" fill="none" stroke="#e0476a" stroke-width="2"/><path d="M1 1q6-2 12 1v9q-6-1.500-12 0z" fill="#4a56a8"/><path d="M3.500 4h8M3.500 7h8" stroke="#fff" stroke-dasharray="1 1.500"/><path d="M1 1v22" stroke="#aaa" stroke-width="1.500"/></svg>
        </div>
        <button class="flex w-11 justify-center" aria-label="Task view"><svg class="size-6" viewBox="0 0 24 24"><path d="M7 1h17v16H7z" fill="#f3f3f3"/><path d="M0 7h17v16H0z" fill="#777" opacity=".85"/><path d="M7 7h10v10H7z" fill="#bbb"/></svg></button>
        <button class="relative flex w-11 justify-center" aria-label="Teams"><svg class="size-6" viewBox="0 0 24 24"><circle cx="10" cy="3.500" r="3.500" fill="#7b83f5"/><path d="M5 9h12q6 0 6 5v4q0 5-6 5H9q-4 0-4-5z" fill="url(#g-teams)"/><rect x="1" y="11" width="11" height="11" rx="2" fill="#4046c0"/><path d="M4 14h5M6.500 14v6" stroke="#fff" stroke-width="1.500"/></svg>
            <span class="absolute -top-1.5 right-[5px] flex size-4 items-center justify-center rounded-full bg-[#c42b1c] text-[11px]">1</span>
            <span class="absolute -bottom-2 h-[3px] w-1.5 rounded-full bg-[#999]"></span></button>
        <button class="relative mx-0.5 flex h-10 w-10 items-center justify-center rounded border border-[#333] bg-[#282828]" aria-label="Edge"><svg class="size-6" viewBox="0 0 24 24"><path d="M0 13C0 5 5 0 12 0c7 0 12 5 12 10.500 0 3.500-2.500 6-6 6-3 0-4.300-1-3.500-2.500C16 11 14 6.500 9 6.500 5 6.500 2 9 0 13z" fill="url(#g-edge)"/><path d="M0 12.500C1.500 8.500 5 6.500 9 6.500c3 0 5.500 2 6 4.500-1.500-1.500-6-.5-5.500 4 .5 4 6 6 12.500 3.500C20 22 16 24 12 24 5 24 0 19 0 12.500z" fill="#1478d0"/><path d="M9.500 10C6.500 12 7 22 13.500 23.800 18 23.500 21 20.500 22.200 18.400 16 21.500 9.500 19 9.300 14.500q-.1-2.500 1.200-4z" fill="#0f4f9e"/></svg>
            <span class="absolute bottom-0 h-[3px] w-4 rounded-full bg-[#4cc2ff]"></span></button>
        <button class="relative flex w-11 justify-center" aria-label="Outlook"><svg class="size-6" viewBox="0 0 24 24"><path d="M3 7L13 1l11 7v11q0 4-4 4H7q-4 0-4-4z" fill="#1668c8"/><path d="M5 6l8-5 7 4.500-10 8z" fill="#2ba8ec"/><path d="M24 9L8 20q-1 3 1 3h11q4 0 4-4z" fill="#35c8f5"/><rect y="5" width="14" height="14" rx="2" fill="#0f6fd0"/><ellipse cx="7" cy="12" rx="3" ry="3.600" fill="none" stroke="#fff" stroke-width="2"/></svg>
            <span class="absolute -bottom-2 h-[3px] w-1.5 rounded-full bg-[#999]"></span></button>
        <button class="flex w-11 justify-center" aria-label="File Explorer"><svg class="size-6" viewBox="0 0 24 24"><path d="M0 2h8l2 3h14v16H0z" fill="#e8a512"/><path d="M0 6h9l2-1h13v17H0z" fill="#ffcf48"/><path d="M4 23v-4q0-2.500 3-2.500h10q3 0 3 2.500v4z" fill="#0f7ad0"/><path d="M8 20h8" stroke="#0a4f96" stroke-width="1.500"/></svg></button>
        <button class="flex w-11 justify-center" aria-label="Discord"><svg class="size-6" viewBox="0 0 24 24"><circle cx="12" cy="12" r="12" fill="#5865f2"/><path d="M7 7.500q2-1.200 3.200-1l.5 1h2.600l.5-1q1.200-.2 3.200 1 2.500 4 2 8-2 1.700-3.700 1.700l-.8-1.500h-5l-.8 1.500q-1.700 0-3.700-1.700-.5-4 2-8z" fill="#fff"/><circle cx="9.500" cy="12.500" r="1.400" fill="#5865f2"/><circle cx="14.500" cy="12.500" r="1.400" fill="#5865f2"/></svg></button>
        <button class="relative flex w-11 justify-center" aria-label="G"><svg class="size-6" viewBox="0 0 24 24"><rect x="2.500" y="2" width="19" height="20" rx="4" fill="#2c0b5c"/><path d="M4 5.500h16M4 18.500h16M5 9v6M19 8v8" stroke="#8a4ae0" stroke-width="1.500" stroke-dasharray="1 2"/><text x="6.500" y="17.500" font-size="15" font-weight="700" fill="#fff">G</text></svg>
            <span class="absolute -bottom-2 h-[3px] w-1.5 rounded-full bg-[#999]"></span></button>
        <button class="flex w-11 justify-center" aria-label="Forms"><svg class="size-6" viewBox="0 0 24 24"><path d="M6 1h18v21H6z" fill="#12959a"/><path d="M6 1h18v10H6z" fill="#30c5c9"/><circle cx="19" cy="6.500" r="3" fill="#0b7a80"/><path d="M16.500 14h5v5h-5z" fill="#30b5b9"/><rect y="5" width="12" height="13" rx="1.500" fill="#077a7e"/><path d="M4.500 15.500V8h4.500M4.500 11.500h4" fill="none" stroke="#fff" stroke-width="1.600"/></svg></button>

        <div class="absolute right-5 top-2 flex items-center gap-2 text-right">
            <p>7:39 AM<br>2/16/2026</p>
            <svg class="h-4 w-3.5" viewBox="0 0 14 16"><path d="M1 12q1-1 1-5 0-5 5-5 5 1 5 6 0 3 1 4zM5 14h4q-2 2.500-4 0z" fill="#fff"/><path d="M5 6h3l-3 3.500h3M10 .7h3L10.500 4H13" fill="none" stroke="#1c1c1c" stroke-width="1.200"/><path d="M10.500 1h3L11 4h2.500" fill="none" stroke="#fff"/></svg>
        </div>
    </footer>

    <script>
        // SHARED PARTS
        document.querySelectorAll('[data-use]').forEach(function (el) {
            el.replaceWith(document.getElementById('tpl-' + el.dataset.use).content.cloneNode(true));
        });

        document.querySelectorAll('section').forEach(function (win) {
            win.querySelector('span[data-path]').textContent = win.dataset.path;
        });

        document.querySelectorAll('[data-rail]').forEach(function (rail) {
            for (let i = 1; i <= 12; i++) {
                rail.innerHTML += `<button class="flex h-[53px] nth-[4n]:h-[52px] shrink-0 items-center"><svg class="size-[22px]"><use href="#i-p${i}"/></svg></button>`;
            }
        });

        // HEADERS
        const fx = `<svg class="ml-0.5 h-4 w-3 text-[#666]"><use href="#i-fx"/></svg>`;

        function head(text, line) {
            return `<th class="border-b-2 p-0 pt-[13px] font-semibold ${line}"><div class="h-full overflow-hidden border-l border-[#ddd] pl-2.5 pt-0.5">${text}</div></th>`;
        }

        const line = 'border-[#5160a8]';
        const line2 = 'border-[#4a64a4]';

        document.getElementById('helper-head').innerHTML =
            `<th class="border-b-2 border-[#5160a8]"></th><th class="border-b-2 border-[#5160a8]"></th>` +
            head('XIB Tasks' + fx, line) + head('MIB Task names' + fx, line) + head('MIB Tasks' + fx, line);

        document.getElementById('report-head').innerHTML =
            `<th class="border-b-2 border-[#4a64a4]"></th>
            <th class="border-b-2 border-[#4a64a4] p-0 pt-[15px] font-semibold"><div class="flex h-[51px] justify-end overflow-hidden pr-4"><span class="whitespace-nowrap">Pulling cables R1<br>Inbound cell<br>(MCP0001)(45KVA)</span></div></th>` +
            head('Terminations R1<br>Inbound cell<br>(MCP0001)(45KVA)', line2) +
            head('Conduit H Mint.<br>Areas,<br>Laptops,Accessorie', line2) +
            `<th class="p-0 pt-[9px] font-semibold"><div class="h-20 rounded-t-sm bg-[#6094d4] pl-[11px] pt-1.5 text-white">Column111</div></th>
            <th class="border-b-2 border-[#4a64a4] p-0 pl-[11px] pt-[15px] font-semibold">Column114</th>`;

        // LEFT ROWS
        const xib = ['', 'D1 Bot charging', 'D2 Bot charging', 'D3 Bot charging', 'D4 Bot charging', 'C1 DRV monitor', 'C1 DRV monitor'];
        const mib = ['H Mint. Areas, Laptops,Accessories', 'R1 Inbound cell (MCP0001)(45KVA)', 'P Adapter cell newtork PLC (UPS)', 'V1 Inbound standard power', 'V2 Inbound standard power'];
        const kinds = ['', 'Conduit ', 'Pulling cables ', 'Terminations '];

        function cell(text) {
            return `<td class="border-b border-l border-[#ddd] p-0 align-top"><div class="mr-[7px] ml-1.5 h-[22px] overflow-hidden whitespace-nowrap">${text}</div></td>`;
        }

        let html = '';
        for (let n = 1; n <= 27; n++) {
            const group = Math.floor((n - 1) / 4);
            const kind = kinds[(n - 1) % 4];
            let first = kind && group < 6 ? kind + xib[group + 1] : '';
            if (n == 26) first = 'Conduit A2 (1) Mastless';
            const name = !kind && mib[group] ? mib[group] : '';
            const task = kind && mib[group] ? kind + mib[group] : '';

            html += `<tr class="font-['Liberation_Sans',sans-serif] text-[15px] leading-[22px] text-black odd:h-[27px] even:h-7">
                <td class="border-b border-[#ddd] p-0 pr-[27px] pt-1 text-right align-top font-['Inter',sans-serif] text-[13px] text-[#999]">${n < 27 ? n : ''}</td>
                <td class="border-b border-[#ddd] p-0 align-top"><div class="flex h-[22px] justify-end overflow-hidden whitespace-nowrap pr-2">${n == 25 ? 'ol Drv 1' : ''}</div></td>
                ${cell(first)}${cell(name)}
                <td class="relative border-b border-l border-[#ddd] p-0 align-top"><div class="ml-1.5 h-[22px] overflow-hidden whitespace-nowrap">${task}</div>
                ${n == 12 ? '<div class="absolute -left-px -top-px -bottom-px right-0 border-2 border-r-0 border-dashed border-[#6094d4]"></div>' : ''}</td></tr>`;
        }
        document.getElementById('helper-rows').innerHTML = html;

        // RIGHT ROWS
        html = '';
        for (let n = 1; n <= 25; n++) {
            html += `<tr class="text-[13px] leading-[22px] odd:h-[27px] even:h-7">
                <td class="border-b border-[#ddd] p-0 pr-[27px] pt-[3px] text-right align-top text-[#999]">${n}</td>
                <td class="border-b border-[#ddd] p-0"></td>
                <td class="border-b border-l border-b-[#ddd] border-l-[#eee] p-0"></td>
                <td class="border-b border-l border-b-[#ddd] border-l-[#eee] p-0"></td>
                <td class="border-x-2 border-b border-x-[#6094d4] border-b-[#d0d9e6] bg-[#cbdbf1] p-0"></td>
                <td class="border-b border-[#ddd] p-0"></td></tr>`;
        }
        document.getElementById('report-rows').innerHTML = html;
    </script>
</body>

</html>
